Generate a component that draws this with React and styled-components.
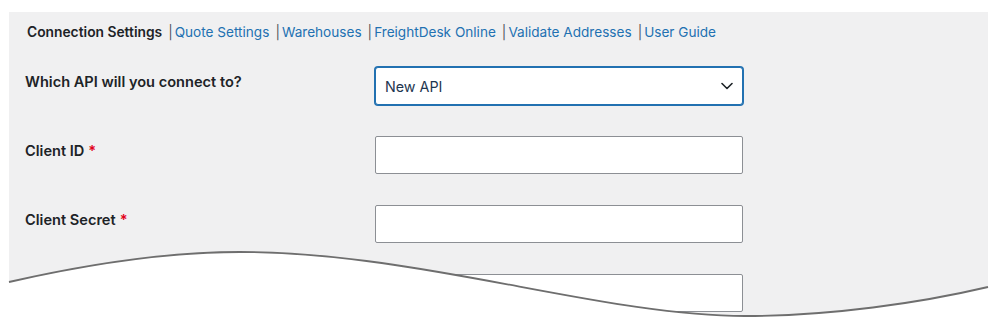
import React from "react";
import styled, { createGlobalStyle } from "styled-components";

const GlobalStyle = createGlobalStyle`
  html, body {
    margin: 0;
    padding: 0;
    background: #ffffff;
  }
  body {
    font-family: Inter, "Liberation Sans", Arial, sans-serif;
    color: #1d2327;
  }
`;

// STYLE
const Page = styled.div`
  position: relative;
  width: 1000px;
  height: 332px;
  overflow: hidden;
  background: #ffffff;
`;

const Panel = styled.section`
  margin: 12px 12px 0 9px;
  height: 340px;
  background: #f0f0f1;
  display: flex;
  flex-direction: column;
`;

const Tabs = styled.nav`
  height: 40px;
  padding: 0 0 0 18px;
  display: flex;
  align-items: center;
  font-size: 13.6px;
  line-height: 20px;
`;

const Tab = styled.a`
  text-decoration: none;
  color: ${(p) => (p.$active ? "#1d2327" : "#2271b1")};
  font-weight: ${(p) => (p.$active ? 600 : 400)};
  font-size: ${(p) => (p.$active ? "13.8px" : "13.6px")};
  white-space: nowrap;
`;

const Sep = styled.span`
  color: #50575e;
  margin: 0 2px 0 6px;
`;

const Form = styled.div`
  display: flex;
  flex-direction: column;
`;

const Row = styled.div`
  display: grid;
  grid-template-columns: 350px 368px;
  padding: 15px 0 16px 16px;
  height: 38px;
`;

const Label = styled.label`
  padding-top: 5px;
  font-size: 14.6px;
  line-height: 20px;
  font-weight: 600;
  color: #1d2327;
`;

const Required = styled.span`
  color: #e2001a;
  margin-left: 4px;
`;

const SelectWrap = styled.div`
  position: relative;
  height: 38px;
`;

const Select = styled.select`
  appearance: none;
  -webkit-appearance: none;
  box-sizing: border-box;
  width: 100%;
  height: 38px;
  padding: 0 32px 0 9px;
  border: 1px solid #2271b1;
  box-shadow: 0 0 0 1px #2271b1;
  border-radius: 3px;
  background: #ffffff;
  font-family: inherit;
  font-size: 14.3px;
  color: #1e3650;
  outline: none;
`;

const Chevron = styled.svg`
  position: absolute;
  right: 10px;
  top: 15px;
  width: 12px;
  height: 8px;
  pointer-events: none;
`;

const Input = styled.input`
  box-sizing: border-box;
  width: 100%;
  height: 38px;
  border: 1px solid #8c8f94;
  border-radius: 2px;
  background: #ffffff;
  font-family: inherit;
  font-size: 14.3px;
  padding: 0 9px;
  outline: none;
`;

const Torn = styled.svg`
  position: absolute;
  left: 0;
  top: 0;
  width: 1000px;
  height: 332px;
  pointer-events: none;
`;

const tabs = [
  "Quote Settings",
  "Warehouses",
  "FreightDesk Online",
  "Validate Addresses",
  "User Guide",
];

const wave =
  "M9 282 C 110 259, 180 252, 240 252 C 420 252, 600 316, 745 316 C 830 316, 920 303, 988 287";

// COMPONENT
const App = () => {
  return (
    <Page>
      <GlobalStyle />
      <Panel>
        <Tabs>
          <Tab $active href="#">Connection Settings</Tab>
          {tabs.map((t) => (
            <React.Fragment key={t}>
              <Sep>|</Sep>
              <Tab href="#">{t}</Tab>
            </React.Fragment>
          ))}
        </Tabs>
        <Form>
          <Row>
            <Label>Which API will you connect to?</Label>
            <SelectWrap>
              <Select defaultValue="new">
                <option value="new">New API</option>
                <option value="legacy">Legacy API</option>
              </Select>
              <Chevron viewBox="0 0 12 8">
                <path d="M1 1.5 L6 6.5 L11 1.5" fill="none" stroke="#1d2327" strokeWidth="1.6" strokeLinecap="round" strokeLinejoin="round" />
              </Chevron>
            </SelectWrap>
          </Row>
          <Row>
            <Label>
              Client ID<Required>*</Required>
            </Label>
            <Input type="text" />
          </Row>
          <Row>
            <Label>
              Client Secret<Required>*</Required>
            </Label>
            <Input type="text" />
          </Row>
          <Row>
            <Label />
            <Input type="text" />
          </Row>
        </Form>
      </Panel>
      <Torn viewBox="0 0 1000 332">
        <path d={`${wave} L1000 287 L1000 332 L0 332 L0 282 Z`} fill="#ffffff" />
        <path d={wave} fill="none" stroke="#6e6e6e" strokeWidth="1.8" />
      </Torn>
    </Page>
  );
};

export default App;
